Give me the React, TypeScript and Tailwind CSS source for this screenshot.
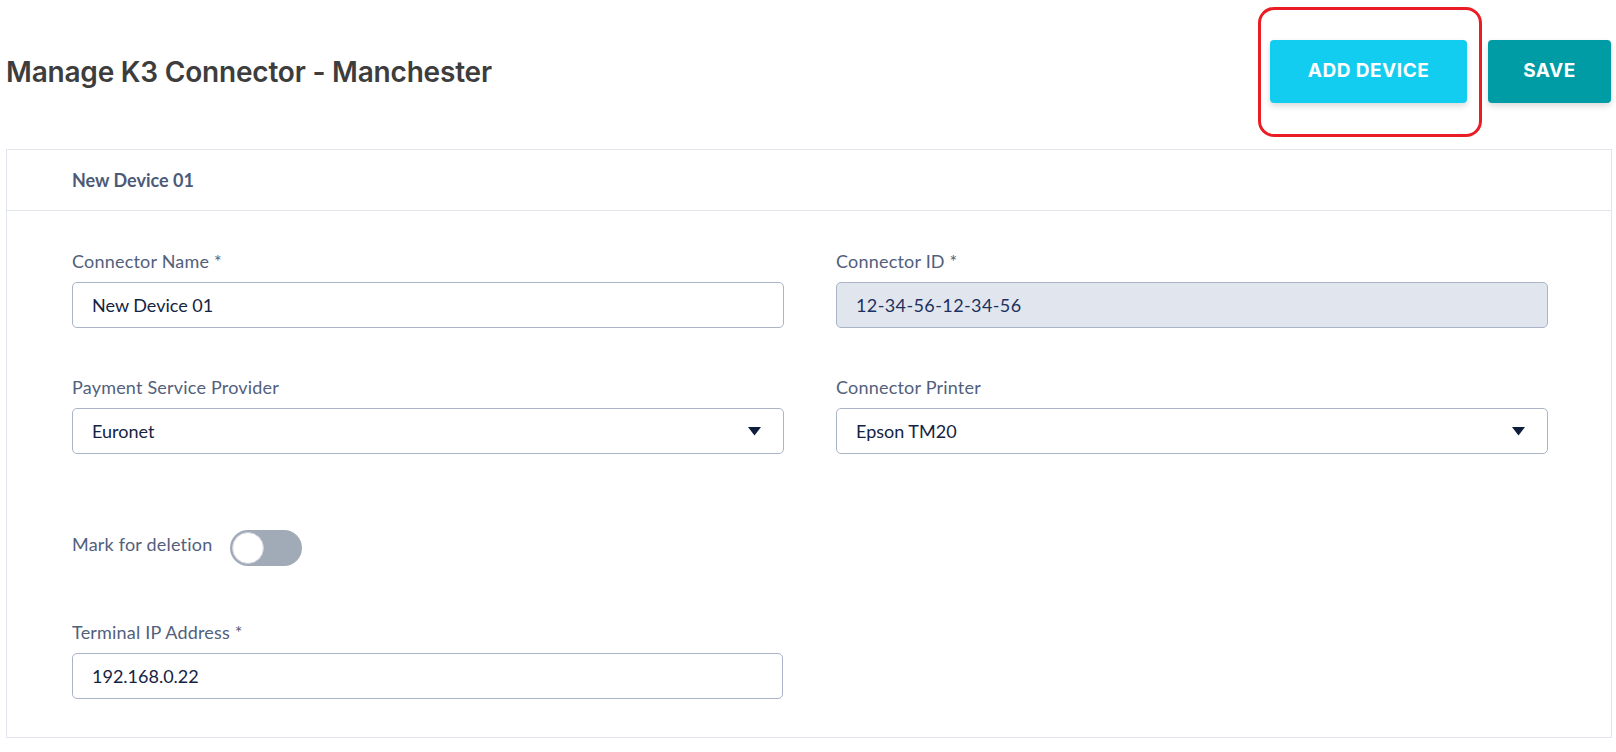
import { useState } from "react";

function Caret() {
  return (
    <svg width="13" height="9" viewBox="0 0 13 9" className="shrink-0">
      <path d="M0 0 H13 L6.5 8.5 Z" fill="#0f1d3d" />
    </svg>
  );
}

function Field({
  label,
  value,
  disabled,
  select,
}: {
  label: string;
  value: string;
  disabled?: boolean;
  select?: boolean;
}) {
  return (
    <div className="flex flex-col">
      <label className="text-[18px] leading-[24px] text-[#52607c] font-['Lato',sans-serif] tracking-[0.2px]">
        {label}
      </label>
      <div
        className={`mt-[9px] h-[46px] rounded-[5px] border border-[#a9b4c6] flex items-center justify-between pl-[19px] pr-[22px] ${
          disabled ? "bg-[#e1e6ee]" : "bg-white"
        }`}
      >
        <span
          className={`text-[18px] font-['Lato',sans-serif] ${
            disabled ? "text-[#1d3160] tracking-[0.4px]" : "text-[#152343]"
          }`}
        >
          {value}
        </span>
        {select && <Caret />}
      </div>
    </div>
  );
}

export default function App() {
  const [marked, setMarked] = useState(false);

  return (
    <div className="min-h-[752px] bg-white pl-[6px] pr-[4px] font-['Lato',sans-serif]">
      <div className="flex items-center justify-between pt-[40px] pr-px">
        <h1 className="text-[28px] font-semibold text-[#3d3d3d] font-['Inter',sans-serif] tracking-[-0.2px]">
          Manage K3 Connector - Manchester
        </h1>
        <div className="flex gap-[21px]">
          <div className="relative">
            <button className="w-[197px] h-[63px] rounded-[4px] bg-[#13cdf0] text-white text-[19px] font-bold tracking-[0.5px] font-['Inter',sans-serif] shadow-[0_3px_6px_rgba(0,0,0,0.15)]">
              ADD DEVICE
            </button>
            <div className="absolute left-[-12px] top-[-33px] w-[224px] h-[130px] border-[3px] border-[#ea1d25] rounded-[16px] pointer-events-none" />
          </div>
          <button className="w-[123px] h-[63px] rounded-[4px] bg-[#009ca6] text-white text-[19px] font-bold tracking-[0.5px] font-['Inter',sans-serif] shadow-[0_3px_6px_rgba(0,0,0,0.15)]">
            SAVE
          </button>
        </div>
      </div>

      <div className="mt-[46px] border border-[#e2e5ec]">
        <div className="h-[61px] border-b border-[#e2e5ec] flex items-center pl-[65px]">
          <span className="text-[18px] font-bold text-[#4c5a78]">New Device 01</span>
        </div>
        <div className="pl-[65px] pr-[63px] pt-[38px] pb-[38px]">
          <div className="grid grid-cols-2 gap-x-[52px] gap-y-[47px]">
            <Field label="Connector Name *" value="New Device 01" />
            <Field label="Connector ID *" value="12-34-56-12-34-56" disabled />
            <Field label="Payment Service Provider" value="Euronet" select />
            <Field label="Connector Printer" value="Epson TM20" select />
          </div>

          <div className="mt-[76px] flex items-start gap-[18px]">
            <span className="text-[18px] leading-[24px] text-[#52607c] tracking-[0.2px] mt-[2px]">
              Mark for deletion
            </span>
            <button
              onClick={() => setMarked(!marked)}
              className={`w-[72px] h-[36px] rounded-full p-[2px] flex ${
                marked ? "bg-[#009ca6] justify-end" : "bg-[#a1aab7] justify-start"
              }`}
            >
              <span className="w-[32px] h-[32px] rounded-full bg-white border border-[#c9ced6] block" />
            </button>
          </div>

          <div className="mt-[54px] w-[711px]">
            <Field label="Terminal IP Address *" value="192.168.0.22" />
          </div>
        </div>
      </div>
    </div>
  );
}
